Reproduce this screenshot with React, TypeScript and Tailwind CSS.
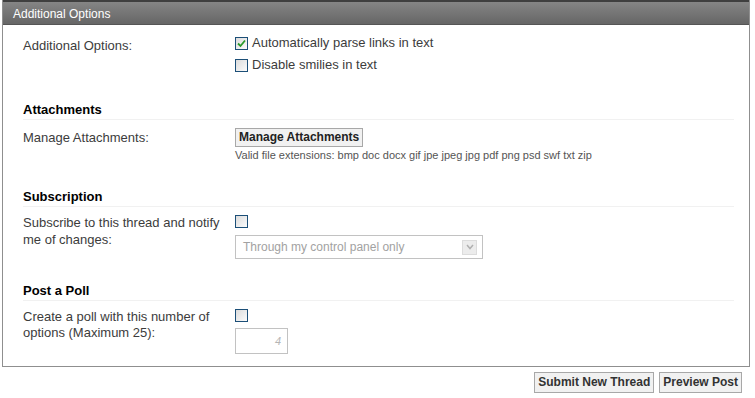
import React from 'react';

function Check({ checked = false }: { checked?: boolean }) {
  return (
    <span className="inline-flex w-[13px] h-[13px] shrink-0 border border-[#1c4f78] bg-gradient-to-br from-[#dcdcdc] to-[#fbfbfb] items-center justify-center">
      {checked && (
        <svg width="9" height="9" viewBox="0 0 9 9">
          <path d="M1 4.5 L3.5 7 L8 1.5" fill="none" stroke="#2a9a2a" strokeWidth="1.8" />
        </svg>
      )}
    </span>
  );
}

function Heading({ children }: { children: React.ReactNode }) {
  return (
    <div className="font-bold text-[13px] text-black leading-[16px] border-b border-[#f1f1f1] mr-[15px] pb-[1px]">
      {children}
    </div>
  );
}

export default function App() {
  return (
    <div className="w-[755px] h-[398px] bg-white font-['Liberation_Sans',sans-serif] text-[13px] text-[#3c3c3c]">
      <div className="mx-[2px] w-[748px] border border-[#8f8f8f] border-t-0">
        <div className="h-[25px] bg-gradient-to-b from-[#858585] to-[#666666] border-t-2 border-[#3f3f3f] border-b border-b-[#555] text-white text-[12px] leading-[24px] pl-[10px]">
          Additional Options
        </div>

        <div className="pl-[20px] pt-[10px] pb-[12px]">
          <div className="flex">
            <div className="w-[212px] pt-[1px]">Additional Options:</div>
            <div className="flex flex-col gap-[6px]">
              <label className="flex items-center gap-[4px] leading-[16px]">
                <Check checked />
                <span>Automatically parse links in text</span>
              </label>
              <label className="flex items-center gap-[4px] leading-[16px]">
                <Check />
                <span>Disable smilies in text</span>
              </label>
            </div>
          </div>

          <div className="mt-[29px]">
            <Heading>Attachments</Heading>
          </div>
          <div className="flex mt-[8px]">
            <div className="w-[212px] leading-[17px] pt-[1px]">Manage Attachments:</div>
            <div className="flex flex-col items-start">
              <button className="h-[19px] px-[3px] border border-[#a8a8a8] bg-[#f1f1f1] font-bold text-[12px] text-[#222] leading-[17px]">
                Manage Attachments
              </button>
              <div className="text-[11px] text-[#555] leading-[15px] mt-[1px]">
                Valid file extensions: bmp doc docx gif jpe jpeg jpg pdf png psd swf txt zip
              </div>
            </div>
          </div>

          <div className="mt-[26px]">
            <Heading>Subscription</Heading>
          </div>
          <div className="flex mt-[7px]">
            <div className="w-[212px] leading-[17px]">
              Subscribe to this thread and notify
              <br />
              me of changes:
            </div>
            <div className="flex flex-col pt-[1px]">
              <Check />
              <div className="mt-[7px] w-[248px] h-[24px] border border-[#c2c2c2] bg-white flex items-center justify-between pl-[7px] pr-[5px]">
                <span className="text-[12px] text-[#a2a2a2]">Through my control panel only</span>
                <span className="w-[15px] h-[15px] bg-[#ececec] border border-[#dcdcdc] flex items-center justify-center">
                  <svg width="8" height="6" viewBox="0 0 8 6">
                    <path d="M1 1 L4 4.5 L7 1" fill="none" stroke="#b0b0b0" strokeWidth="1.5" />
                  </svg>
                </span>
              </div>
            </div>
          </div>

          <div className="mt-[24px]">
            <Heading>Post a Poll</Heading>
          </div>
          <div className="flex mt-[8px]">
            <div className="w-[212px] leading-[16px]">
              Create a poll with this number of
              <br />
              options (Maximum 25):
            </div>
            <div className="flex flex-col">
              <Check />
              <div className="mt-[6px] w-[53px] h-[26px] border border-[#c2c2c2] bg-white flex items-center justify-end pr-[6px] text-[11px] italic text-[#b5b5b5]">
                4
              </div>
            </div>
          </div>
        </div>
      </div>

      <div className="flex justify-end gap-[5px] pr-[13px] mt-[5px]">
        <button className="h-[21px] px-[3px] border border-[#a8a8a8] bg-[#f1f1f1] font-bold text-[12px] text-[#333] leading-[19px]">
          Submit New Thread
        </button>
        <button className="h-[21px] px-[3px] border border-[#a8a8a8] bg-[#f1f1f1] font-bold text-[12px] text-[#333] leading-[19px]">
          Preview Post
        </button>
      </div>
    </div>
  );
}
